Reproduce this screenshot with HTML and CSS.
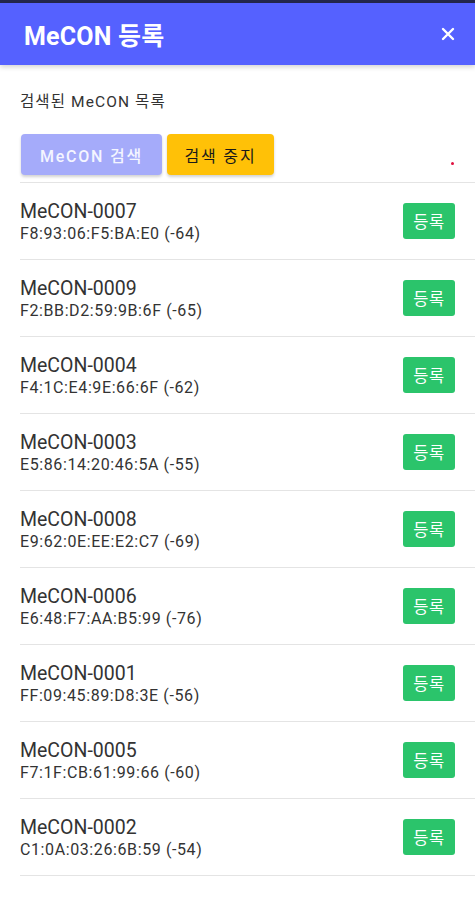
FILE: index.html
```html
<!DOCTYPE html>
<html lang="ko">
<head>
<meta charset="utf-8">
<title>MeCON 등록</title>
<link rel="stylesheet" href="styles.css">
</head>
<body>
<div class="statusbar"></div>
<header class="header">
  <h1 class="title">MeCON 등록</h1>
  <button class="close" aria-label="닫기">
    <svg width="14" height="14" viewBox="0 0 14 14"><path d="M2 2 L12 12 M12 2 L2 12" stroke="#fff" stroke-width="2.4" stroke-linecap="round"/></svg>
  </button>
</header>
<main class="content">
  <p class="label">검색된 MeCON 목록</p>
  <div class="actions">
    <button class="btn btn-search">MeCON 검색</button>
    <button class="btn btn-stop">검색 중지</button>
    <span class="dot"></span>
  </div>
  <ul class="list">
    <li class="item"><div class="info"><div class="name">MeCON-0007</div><div class="mac">F8:93:06:F5:BA:E0 (-64)</div></div><button class="reg">등록</button></li>
    <li class="item"><div class="info"><div class="name">MeCON-0009</div><div class="mac">F2:BB:D2:59:9B:6F (-65)</div></div><button class="reg">등록</button></li>
    <li class="item"><div class="info"><div class="name">MeCON-0004</div><div class="mac">F4:1C:E4:9E:66:6F (-62)</div></div><button class="reg">등록</button></li>
    <li class="item"><div class="info"><div class="name">MeCON-0003</div><div class="mac">E5:86:14:20:46:5A (-55)</div></div><button class="reg">등록</button></li>
    <li class="item"><div class="info"><div class="name">MeCON-0008</div><div class="mac">E9:62:0E:EE:E2:C7 (-69)</div></div><button class="reg">등록</button></li>
    <li class="item"><div class="info"><div class="name">MeCON-0006</div><div class="mac">E6:48:F7:AA:B5:99 (-76)</div></div><button class="reg">등록</button></li>
    <li class="item"><div class="info"><div class="name">MeCON-0001</div><div class="mac">FF:09:45:89:D8:3E (-56)</div></div><button class="reg">등록</button></li>
    <li class="item"><div class="info"><div class="name">MeCON-0005</div><div class="mac">F7:1F:CB:61:99:66 (-60)</div></div><button class="reg">등록</button></li>
    <li class="item"><div class="info"><div class="name">MeCON-0002</div><div class="mac">C1:0A:03:26:6B:59 (-54)</div></div><button class="reg">등록</button></li>
  </ul>
</main>
</body>
</html>
```
FILE: styles.css
```css
* { box-sizing: border-box; }
html, body { margin: 0; padding: 0; background: #fff; }
body {
  font-family: Roboto, "Noto Sans CJK KR", sans-serif;
  color: #222;
  width: 475px;
  height: 900px;
  overflow: hidden;
}
.statusbar { height: 3px; background: #24274d; }
.header {
  height: 62px;
  background: #5561ff;
  display: flex;
  align-items: center;
  justify-content: space-between;
  padding: 0 18px 0 24px;
  box-shadow: 0 2px 5px rgba(0,0,0,0.18);
  position: relative;
}
.title {
  margin: 0;
  color: #fff;
  font-size: 25px;
  font-weight: 700;
  letter-spacing: 0.2px;
}
.close {
  background: none;
  border: 0;
  padding: 0;
  width: 14px;
  height: 14px;
  display: flex;
  margin-right: 2px;
}
.content { padding-top: 27px; }
.label {
  margin: 0 0 0 20px;
  font-size: 15.5px;
  line-height: 20px;
  letter-spacing: 1.1px;
  color: #333;
}
.actions {
  display: flex;
  align-items: center;
  gap: 5px;
  margin: 22px 0 0 21px;
  height: 41px;
  position: relative;
}
.btn {
  border: 0;
  border-radius: 4px;
  height: 41px;
  font-family: Roboto, "Noto Sans CJK KR", sans-serif;
  font-size: 16px;
  font-weight: 500;
  letter-spacing: 1.8px;
  box-shadow: 0 2px 3px rgba(0,0,0,0.18);
  padding: 0;
}
.btn-search { width: 141px; background: #a5abfa; color: #f4f5ff; }
.btn-stop { width: 107px; background: #ffc107; color: #1a1a1a; font-weight: 400; }
.dot {
  position: absolute;
  left: 430px;
  top: 28px;
  width: 3px;
  height: 3px;
  border-radius: 50%;
  background: #e0103e;
}
.list {
  list-style: none;
  margin: 7px 0 0 20px;
  padding: 0;
  border-top: 1px solid #e4e4e4;
}
.item {
  display: flex;
  align-items: center;
  justify-content: space-between;
  height: 77px;
  padding: 0 20px 0 0;
  border-bottom: 1px solid #e4e4e4;
}
.info { display: flex; flex-direction: column; padding-top: 1px; }
.name { font-size: 19.5px; line-height: 24px; color: #333; }
.mac { font-size: 16px; line-height: 20px; letter-spacing: 0.6px; color: #333; }
.reg {
  width: 52px;
  height: 36px;
  border: 0;
  border-radius: 3px;
  background: #2bc46b;
  color: #fff;
  font-family: "Noto Sans CJK KR", sans-serif;
  font-size: 16.5px;
  letter-spacing: 0.5px;
  padding: 0;
}
```
